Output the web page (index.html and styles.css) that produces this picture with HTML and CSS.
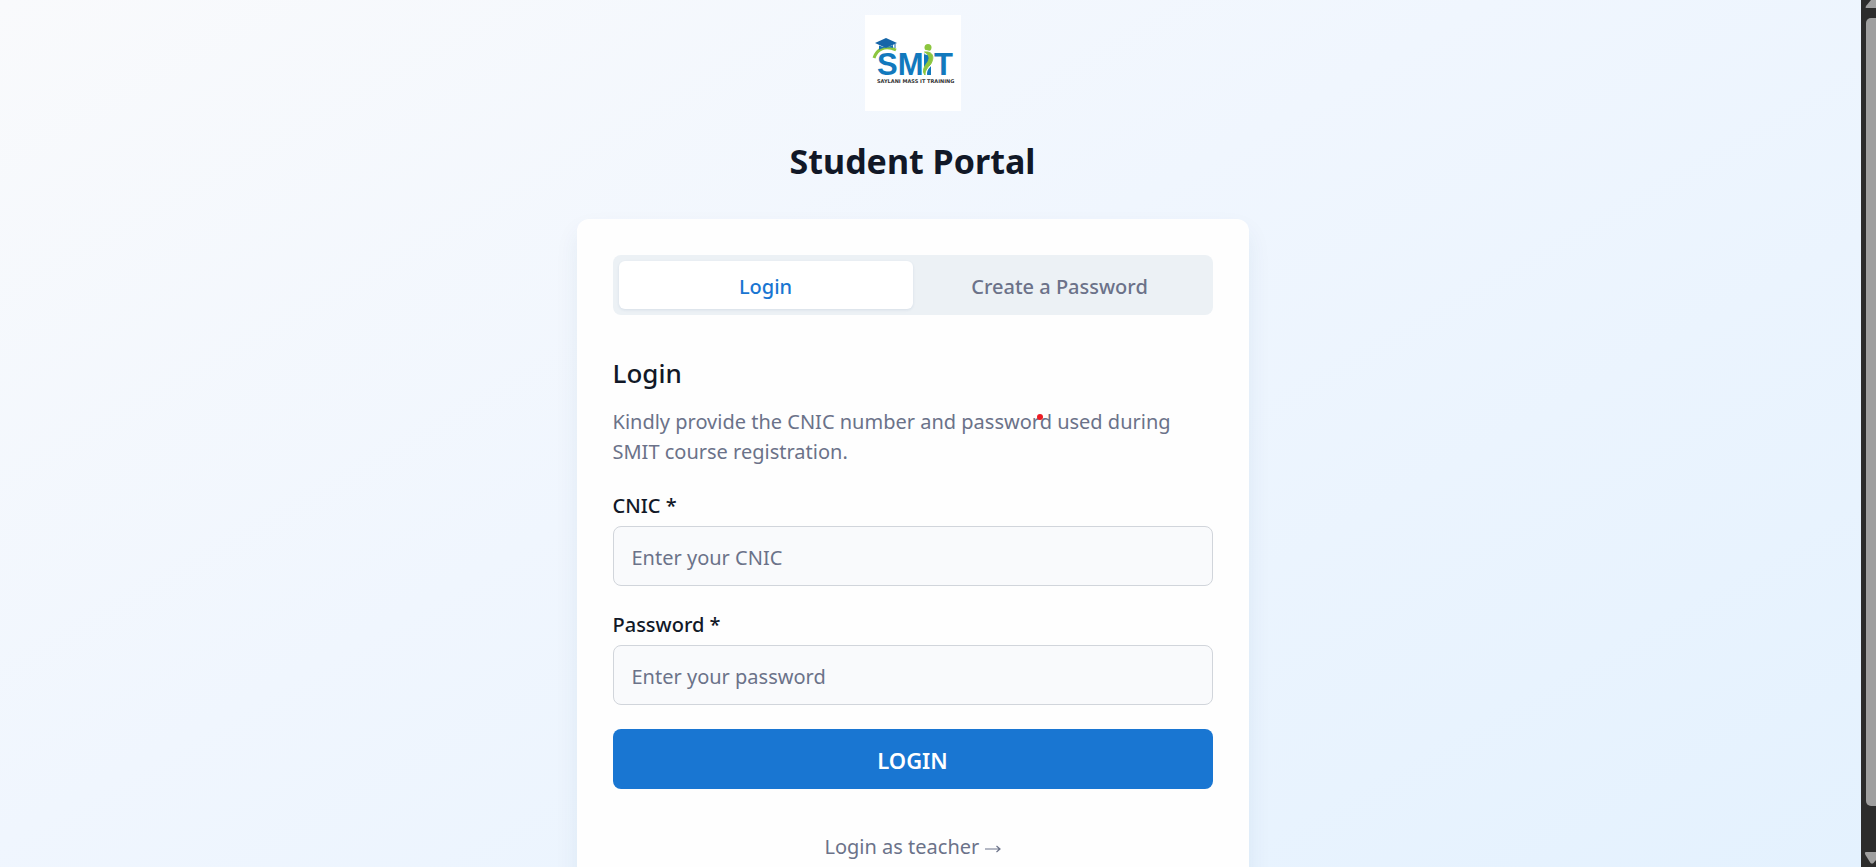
FILE: index.html
```html
<!DOCTYPE html>
<html lang="en">
<head>
<meta charset="utf-8">
<meta name="viewport" content="width=device-width, initial-scale=1">
<title>Student Portal</title>
<link rel="stylesheet" href="styles.css">
</head>
<body>
<div class="window">
  <main class="page">
    <svg class="logo" viewBox="0 0 96 96" role="img" aria-label="SMIT">
      <rect width="96" height="96" fill="#fff"/>
      <text x="12" y="60" class="logo-name">SM</text>
      <rect x="59" y="38" width="7" height="22" fill="#1279bd"/>
      <text x="69" y="60" class="logo-name">T</text>
      <path d="M9 43C12 34 20 30 31 35" fill="none" stroke="#8cc63f" stroke-width="3"/>
      <path d="M10 28L21 23L32 28L21 33Z" fill="#1565a8"/>
      <path d="M14 30.500V35C18 32.500 24 32 28 33V30L21 33Z" fill="#1873b5"/>
      <path d="M30 29V33" stroke="#1565a8" stroke-width="1"/>
      <circle cx="63" cy="32.500" r="3.500" fill="#8cc63f"/>
      <path d="M59.500 37C69 38 68 45 64 50C60 54 59 57 60 61" fill="none" stroke="#fff" stroke-width="4.500"/>
      <path d="M59.500 37C70 36 69 45 65 50C61 54 60 57 60 60C57 56 59 52 62 48C65 44 65 40 59.500 37Z" fill="#8cc63f" stroke="#8cc63f" stroke-width="1"/>
      <text x="12" y="68" class="logo-tag">SAYLANI MASS IT TRAINING</text>
    </svg>
    <h1 class="title">Student Portal</h1>
    <section class="card">
      <div class="tabs" role="tablist">
        <button class="tab tab-active" type="button" role="tab" aria-selected="true">Login</button>
        <button class="tab" type="button" role="tab" aria-selected="false">Create a Password</button>
      </div>
      <h2 class="heading">Login</h2>
      <div class="intro">
        <p>Kindly provide the CNIC number and password used during SMIT course registration.</p>
        <span class="dot"></span>
      </div>
      <form class="form">
        <div class="field">
          <label for="cnic">CNIC *</label>
          <input id="cnic" type="text" placeholder="Enter your CNIC">
        </div>
        <div class="field">
          <label for="password">Password *</label>
          <input id="password" type="password" placeholder="Enter your password">
        </div>
        <button class="submit" type="button">LOGIN</button>
      </form>
      <a class="teacher" href="#">Login as teacher <svg class="arrow" viewBox="0 0 16 10" aria-hidden="true"><path d="M0 5H15M11.500 2L15 5L11.500 8" fill="none" stroke="currentColor" stroke-width="1.200"/></svg></a>
    </section>
  </main>
  <div class="scrollbar" aria-hidden="true">
    <svg class="scroll-arrow" viewBox="0 0 15 18"><path d="M5 8Q4 8 5 6L10 0H15V8Z" fill="#9f9f9f"/></svg>
    <div class="thumb"></div>
    <svg class="scroll-arrow-down" viewBox="0 0 15 16"><path d="M5 1H15V9L12.500 12Q11 13 9.500 12L4.500 4Q3 1 5 1Z" fill="#9f9f9f"/></svg>
  </div>
</div>
</body>
</html>
```
FILE: styles.css
```css
* {
  box-sizing: border-box;
}

body {
  margin: 0;
  font-family: "Noto Sans", "Open Sans", sans-serif;
  font-size: 20px;
  line-height: 30px;
  color: #111827;
}

button,
input {
  font: inherit;
}

.window {
  display: flex;
  height: 100vh;
  overflow: hidden;
}

.page {
  flex: 1;
  display: flex;
  flex-direction: column;
  align-items: center;
  min-height: 1050px;
  padding: 15px 36px 0 0;
  background: linear-gradient(to bottom right, #f9fafc 0%, #f0f6fe 40%, #e3f1fe 95%);
}

.logo {
  flex: none;
  width: 96px;
  height: 96px;
}

.logo-name {
  font: bold 31px "Liberation Sans", sans-serif;
  fill: #1279bd;
}

.logo-tag {
  font: bold 5px "DejaVu Sans", sans-serif;
  fill: #333;
}

.title {
  margin: 28px 0 36px;
  font-size: 34px;
  line-height: 44px;
  font-weight: 700;
}

.card {
  display: flex;
  flex-direction: column;
  width: 100%;
  max-width: 672px;
  padding: 36px;
  border-radius: 12px;
  background: #fefefe;
  box-shadow: 0 12px 24px rgba(30, 64, 120, 0.07);
}

.tabs {
  display: flex;
  padding: 6px;
  border-radius: 8px;
  background: #ecf1f5;
}

.tab {
  flex: 1;
  height: 48px;
  padding: 4px 0 0;
  border: 0;
  border-radius: 6px;
  background: none;
  color: #6b7289;
  font-weight: 500;
}

.tab-active {
  background: #fff;
  color: #1976d2;
  box-shadow: 0 1px 3px rgba(30, 64, 120, 0.1);
}

.heading {
  margin: 40px 0 16px;
  font-size: 26px;
  line-height: 36px;
  font-weight: 500;
}

.intro {
  position: relative;
  margin-bottom: 24px;
  color: #6b7289;
}

.intro p {
  margin: 0;
}

.dot {
  position: absolute;
  top: 7px;
  left: 424px;
  width: 6px;
  height: 6px;
  border-radius: 50%;
  background: #ed1c24;
}

.form {
  display: flex;
  flex-direction: column;
  gap: 24px;
}

.field {
  display: flex;
  flex-direction: column;
  gap: 5px;
}

.field label {
  font-weight: 500;
}

.field input {
  height: 60px;
  padding: 2px 18px 0;
  border: 1px solid #d1d5db;
  border-radius: 8px;
  background: #f9fafc;
  color: #111827;
}

.field input::placeholder {
  color: #6b7289;
  opacity: 1;
}

.submit {
  height: 60px;
  padding: 2px 0 0;
  border: 0;
  border-radius: 8px;
  background: #1976d2;
  color: #fff;
  font-size: 22px;
  font-weight: 600;
}

.teacher {
  align-self: center;
  margin-top: 43px;
  color: #6b7289;
  text-decoration: none;
}

.arrow {
  width: 16px;
  height: 10px;
}

.scrollbar {
  display: flex;
  flex-direction: column;
  width: 15px;
  background: #2c2c2c;
}

.scroll-arrow {
  flex: none;
  height: 18px;
}

.thumb {
  flex: 1;
  margin: 0 0 45px 5px;
  border-radius: 5px 0 0 5px;
  background: #9f9f9f;
}

.scroll-arrow-down {
  flex: none;
  height: 16px;
}
```
